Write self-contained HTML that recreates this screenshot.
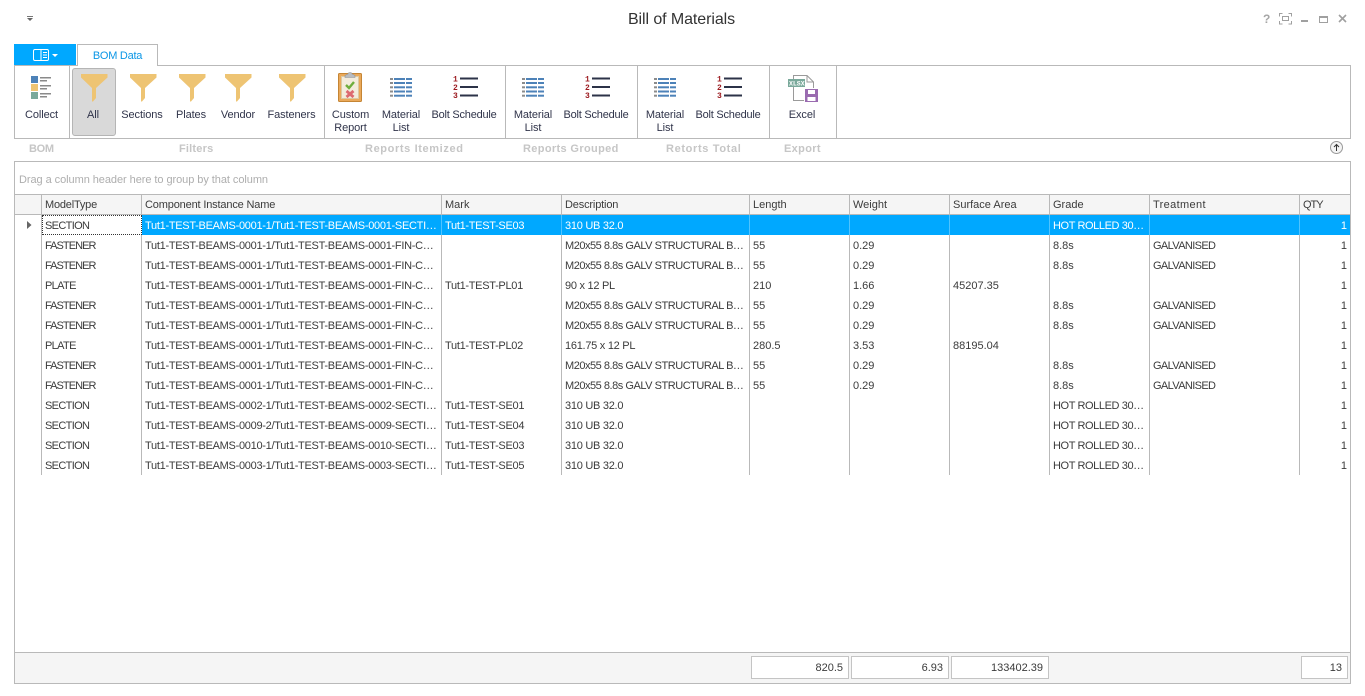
<!DOCTYPE html>
<html>
<head>
<meta charset="utf-8">
<title>Bill of Materials</title>
<style>
html,body{margin:0;padding:0;width:1365px;height:696px;overflow:hidden;background:#fff;}
body{font-family:"Liberation Sans",sans-serif;font-size:11px;color:#3b3b3b;position:relative;}
.a{position:absolute;}
.b{position:absolute;background:#b9b9b9;}
.lb{position:absolute;text-align:center;color:#30344a;line-height:13px;letter-spacing:-.1px;white-space:nowrap;}
.bs{letter-spacing:-.22px;}
.gl{position:absolute;top:142px;font-weight:bold;color:#c6c6c6;white-space:nowrap;font-size:11px;line-height:14px;letter-spacing:.55px;}
svg{position:absolute;overflow:visible;}
table{position:absolute;left:15px;top:195px;border-collapse:separate;border-spacing:0;table-layout:fixed;width:1335px;}
th,td{padding:0 0 0 3px;overflow:hidden;white-space:nowrap;box-sizing:border-box;text-align:left;font-weight:normal;}
th{height:20px;background:#f5f5f5;border-right:1px solid #b9b9b9;border-bottom:1px solid #b9b9b9;color:#3b3b3b;}
td{height:20px;padding-top:2px;border-right:1px solid #b9b9b9;color:#3b3b3b;}
td:first-child,th:first-child{padding:0;}
tr.s td{background:#00a8ff;color:#fff;border-right:1px solid #4fc3ff;}
tr.s td:first-child{background:#fff;border-right:1px solid #b9b9b9;}
tr.s td:nth-child(2){background:#fff;color:#3b3b3b;outline:1px dotted #333;outline-offset:-1px;border-right:0;}
td:last-child,th:last-child,tr.s td:last-child{border-right:0;}
td:last-child{text-align:right;padding:2px 3px 0 0;}
td:nth-child(2){letter-spacing:-.65px;}
td.f{letter-spacing:-.95px;}
td:nth-child(3){letter-spacing:-.29px;}
td:nth-child(4){letter-spacing:-.3px;}
td:nth-child(5){letter-spacing:-.47px;}
td:nth-child(10){letter-spacing:-.63px;}
td.h{letter-spacing:-.4px;}
td.d{letter-spacing:-.27px;}
th.m{letter-spacing:-.2px;}
th.c{letter-spacing:-.16px;}
th.t{letter-spacing:.35px;}
th.q{letter-spacing:-1px;}
.sb{position:absolute;top:656px;height:23px;background:#fff;border:1px solid #c4c4c4;box-sizing:border-box;text-align:right;padding-right:5px;line-height:22px;color:#3b3b3b;}
</style>
</head>
<body>
<svg style="left:27px;top:16px" width="7" height="6"><rect x="0" y="0" width="6" height="1" fill="#777"/><path d="M0 2h6L3 5z" fill="#666"/></svg>
<div class="a" style="left:-1px;width:1365px;top:10px;text-align:center;font-size:16px;line-height:20px;color:#333;letter-spacing:-.08px">Bill of Materials</div>

<svg style="left:1260px;top:12px" width="95" height="14" fill="none" stroke="#a0a0a0">
<text x="3" y="11" font-family="Liberation Sans" font-weight="bold" font-size="12" fill="#a6a6a6" stroke="none">?</text>
<path d="M19.500 4.500V1.500h3M28.500 1.500h3v3M31.500 9v3h-3M22.500 12h-3V9" stroke-width="1"/><rect x="22.500" y="4.500" width="6" height="4"/>
<rect x="41" y="8" width="7" height="2" fill="#a0a0a0" stroke="none"/>
<rect x="59.500" y="4.500" width="8" height="6"/><rect x="59" y="4" width="9" height="2" fill="#a0a0a0" stroke="none"/>
<path d="M79 3l7 7M86 3l-7 7" stroke-width="1.600"/>
</svg>

<!-- tabs -->
<div class="a" style="left:14px;top:44px;width:62px;height:22px;background:#00a8ff"></div>
<svg style="left:33px;top:48px" width="28" height="14" fill="none" stroke="#fff">
<rect x=".5" y="1.500" width="15" height="11" rx="1.500"/><path d="M8 2v10" /><path d="M10 4.500h4M10 7h4M10 9.500h4" stroke="#fff"/>
<path d="M19 6h6l-3 3z" fill="#fff" stroke="none"/>
</svg>
<div class="a" style="left:77px;top:44px;width:81px;height:22px;background:#fff;border:1px solid #b9b9b9;border-bottom:0;box-sizing:border-box;text-align:center;line-height:23px;color:#0a96e6;letter-spacing:-.25px">BOM Data</div>

<!-- ribbon -->
<div class="b" style="left:14px;top:65px;width:63px;height:1px"></div>
<div class="b" style="left:158px;top:65px;width:1193px;height:1px"></div>
<div class="b" style="left:14px;top:138px;width:1337px;height:1px"></div>
<div class="b" style="left:14px;top:65px;width:1px;height:74px"></div>
<div class="b" style="left:1350px;top:65px;width:1px;height:74px"></div>
<div class="b" style="left:69px;top:66px;width:1px;height:72px"></div>
<div class="b" style="left:324px;top:66px;width:1px;height:72px"></div>
<div class="b" style="left:505px;top:66px;width:1px;height:72px"></div>
<div class="b" style="left:637px;top:66px;width:1px;height:72px"></div>
<div class="b" style="left:769px;top:66px;width:1px;height:72px"></div>
<div class="b" style="left:836px;top:66px;width:1px;height:72px"></div>

<div class="a" style="left:72px;top:68px;width:44px;height:68px;background:#d9d9d9;border:1px solid #b5b5b5;border-radius:3px;box-sizing:border-box"></div>

<!-- collect -->
<svg style="left:31px;top:76px" width="22" height="24">
<rect x="0" y="0" width="7" height="7" fill="#4d82b8"/><rect x="0" y="8" width="7" height="7" fill="#eec473"/><rect x="0" y="16" width="7" height="7" fill="#7aa99b"/>
<g fill="#8a8a8a"><rect x="9" y="1" width="11" height="1.500"/><rect x="9" y="4" width="7" height="1.500"/><rect x="9" y="9" width="11" height="1.500"/><rect x="9" y="12" width="7" height="1.500"/><rect x="9" y="17" width="11" height="1.500"/><rect x="9" y="20" width="7" height="1.500"/></g>
</svg>

<!-- funnels -->
<svg style="left:81px;top:74px" width="27" height="28"><path d="M0 0H26.500V3.500L15 14V24L12 27.500H11V14L0 3.500Z" fill="#eec473"/></svg>
<svg style="left:130px;top:74px" width="27" height="28"><path d="M0 0H26.500V3.500L15 14V24L12 27.500H11V14L0 3.500Z" fill="#eec473"/></svg>
<svg style="left:179px;top:74px" width="27" height="28"><path d="M0 0H26.500V3.500L15 14V24L12 27.500H11V14L0 3.500Z" fill="#eec473"/></svg>
<svg style="left:225px;top:74px" width="27" height="28"><path d="M0 0H26.500V3.500L15 14V24L12 27.500H11V14L0 3.500Z" fill="#eec473"/></svg>
<svg style="left:279px;top:74px" width="27" height="28"><path d="M0 0H26.500V3.500L15 14V24L12 27.500H11V14L0 3.500Z" fill="#eec473"/></svg>

<!-- custom report -->
<svg style="left:338px;top:71px" width="26" height="32">
<rect x=".5" y="2.500" width="23" height="28" rx="1" fill="#eaa95a" stroke="#c58534"/>
<rect x="3.500" y="5.500" width="17" height="22" fill="#f3ecdc" stroke="#dcc9a3"/>
<path d="M7 4.500c1-.5 2-1 3-1.500 0-2 4-2 4 0 1 .5 2 1 3 1.500v2H7z" fill="#b9bcc0" stroke="#8e9297" stroke-width=".6"/>
<path d="M8 14l3 3 5-6" fill="none" stroke="#6fae3c" stroke-width="2.400"/>
<path d="M8.500 20l7 6M15.500 20l-7 6" fill="none" stroke="#dd6a70" stroke-width="2.800"/>
</svg>

<!-- material list + bolt -->
<svg width="0" height="0" style="left:0;top:0"><defs>
<g id="ml"><g fill="#8b8b8b"><rect x="0" y="0" width="3" height="2"/><rect x="0" y="4" width="3" height="2"/><rect x="0" y="8.300" width="3" height="2"/><rect x="0" y="12.500" width="3" height="2"/><rect x="0" y="16.700" width="3" height="2"/></g>
<g fill="#4d82b8"><rect x="4" y="0" width="11" height="2"/><rect x="16" y="0" width="6" height="2"/><rect x="4" y="4" width="11" height="2"/><rect x="16" y="4" width="6" height="2"/><rect x="4" y="8.300" width="11" height="2"/><rect x="16" y="8.300" width="6" height="2"/><rect x="4" y="12.500" width="11" height="2"/><rect x="16" y="12.500" width="6" height="2"/><rect x="4" y="16.700" width="11" height="2"/><rect x="16" y="16.700" width="6" height="2"/></g></g>
<g id="bs"><g fill="#2c3348"><rect x="7" y="1.500" width="18" height="2"/><rect x="7" y="10" width="18" height="2"/><rect x="7" y="18.500" width="18" height="2"/></g></g>
</defs></svg>
<svg style="left:390px;top:78px" width="23" height="19"><use href="#ml"/></svg>
<svg style="left:522px;top:78px" width="23" height="19"><use href="#ml"/></svg>
<svg style="left:654px;top:78px" width="23" height="19"><use href="#ml"/></svg>
<svg style="left:453px;top:76px" width="26" height="22"><use href="#bs"/><g font-family="Liberation Mono" font-weight="bold" font-size="8" fill="#9c1a1f"><text x="0" y="5.500">1</text><text x="0" y="14">2</text><text x="0" y="22">3</text></g></svg>
<svg style="left:585px;top:76px" width="26" height="22"><use href="#bs"/><g font-family="Liberation Mono" font-weight="bold" font-size="8" fill="#9c1a1f"><text x="0" y="5.500">1</text><text x="0" y="14">2</text><text x="0" y="22">3</text></g></svg>
<svg style="left:717px;top:76px" width="26" height="22"><use href="#bs"/><g font-family="Liberation Mono" font-weight="bold" font-size="8" fill="#9c1a1f"><text x="0" y="5.500">1</text><text x="0" y="14">2</text><text x="0" y="22">3</text></g></svg>

<!-- excel -->
<svg style="left:787px;top:74px" width="32" height="29">
<path d="M6.500 5V1.500H20l6.500 6.500V14M6.500 13v13.500H17" fill="#fff" stroke="#9a9a9a"/>
<path d="M20 1.500V8h6.500" fill="none" stroke="#9a9a9a"/>
<rect x="1" y="5" width="17" height="8" fill="#7aa99b"/>
<text x="2" y="11.500" font-family="Liberation Mono" font-weight="bold" font-size="6.500" fill="#fff">XLSX</text>
<rect x="18" y="15" width="13" height="13" fill="#9a6bb0"/>
<rect x="21" y="16" width="7" height="4" fill="#fff"/><rect x="20.500" y="23" width="8" height="4" fill="#fff"/>
</svg>

<!-- ribbon labels -->
<div class="lb" style="left:14px;width:55px;top:108px;margin-top:1px">Collect</div>
<div class="lb" style="left:71px;width:44px;top:109px">All</div>
<div class="lb" style="left:118px;width:48px;top:109px">Sections</div>
<div class="lb" style="left:170px;width:42px;top:109px">Plates</div>
<div class="lb" style="left:216px;width:44px;top:109px">Vendor</div>
<div class="lb" style="left:264px;width:55px;top:109px">Fasteners</div>
<div class="lb" style="left:327px;width:47px;top:109px">Custom<br>Report</div>
<div class="lb" style="left:378px;width:46px;top:109px">Material<br>List</div>
<div class="lb bs" style="left:428px;width:72px;top:109px">Bolt Schedule</div>
<div class="lb" style="left:510px;width:46px;top:109px">Material<br>List</div>
<div class="lb bs" style="left:560px;width:72px;top:109px">Bolt Schedule</div>
<div class="lb" style="left:642px;width:46px;top:109px">Material<br>List</div>
<div class="lb bs" style="left:692px;width:72px;top:109px">Bolt Schedule</div>
<div class="lb" style="left:779px;width:46px;top:109px">Excel</div>

<div class="gl" style="left:29px;letter-spacing:-.3px">BOM</div>
<div class="gl" style="left:179px;letter-spacing:.2px">Filters</div>
<div class="gl" style="left:365px;letter-spacing:.62px">Reports Itemized</div>
<div class="gl" style="left:523px;letter-spacing:.35px">Reports Grouped</div>
<div class="gl" style="left:666px;letter-spacing:.65px">Retorts Total</div>
<div class="gl" style="left:784px;letter-spacing:.35px">Export</div>

<svg style="left:1330px;top:141px" width="13" height="13" fill="none"><circle cx="6.500" cy="6.500" r="6" fill="#f4f4f4" stroke="#9a9a9a"/><path d="M6.500 10V3.500M4 6l2.500-2.500L9 6" stroke="#333"/></svg>

<!-- grid frame -->
<div class="a" style="left:14px;top:161px;width:1337px;height:523px;border:1px solid #b9b9b9;box-sizing:border-box"></div>
<div class="b" style="left:15px;top:194px;width:1335px;height:1px"></div>
<div class="a" style="left:19px;top:173px;color:#aeaeae;letter-spacing:-.06px;line-height:14px">Drag a column header here to group by that column</div>

<table>
<colgroup><col style="width:27px"><col style="width:100px"><col style="width:300px"><col style="width:120px"><col style="width:188px"><col style="width:100px"><col style="width:100px"><col style="width:100px"><col style="width:100px"><col style="width:150px"><col style="width:50px"></colgroup>
<tr><th></th><th class="m">ModelType</th><th class="c">Component Instance Name</th><th>Mark</th><th class="c">Description</th><th>Length</th><th>Weight</th><th>Surface Area</th><th>Grade</th><th class="t">Treatment</th><th class="q">QTY</th></tr>
<tr class="s"><td></td><td>SECTION</td><td>Tut1-TEST-BEAMS-0001-1/Tut1-TEST-BEAMS-0001-SECTI…</td><td>Tut1-TEST-SE03</td><td class="d">310 UB 32.0</td><td></td><td></td><td></td><td class="h">HOT ROLLED 30…</td><td></td><td>1</td></tr>
<tr><td></td><td class="f">FASTENER</td><td>Tut1-TEST-BEAMS-0001-1/Tut1-TEST-BEAMS-0001-FIN-C…</td><td></td><td>M20x55 8.8s GALV STRUCTURAL B…</td><td>55</td><td>0.29</td><td></td><td>8.8s</td><td>GALVANISED</td><td>1</td></tr>
<tr><td></td><td class="f">FASTENER</td><td>Tut1-TEST-BEAMS-0001-1/Tut1-TEST-BEAMS-0001-FIN-C…</td><td></td><td>M20x55 8.8s GALV STRUCTURAL B…</td><td>55</td><td>0.29</td><td></td><td>8.8s</td><td>GALVANISED</td><td>1</td></tr>
<tr><td></td><td>PLATE</td><td>Tut1-TEST-BEAMS-0001-1/Tut1-TEST-BEAMS-0001-FIN-C…</td><td>Tut1-TEST-PL01</td><td class="d">90 x 12 PL</td><td>210</td><td>1.66</td><td>45207.35</td><td></td><td></td><td>1</td></tr>
<tr><td></td><td class="f">FASTENER</td><td>Tut1-TEST-BEAMS-0001-1/Tut1-TEST-BEAMS-0001-FIN-C…</td><td></td><td>M20x55 8.8s GALV STRUCTURAL B…</td><td>55</td><td>0.29</td><td></td><td>8.8s</td><td>GALVANISED</td><td>1</td></tr>
<tr><td></td><td class="f">FASTENER</td><td>Tut1-TEST-BEAMS-0001-1/Tut1-TEST-BEAMS-0001-FIN-C…</td><td></td><td>M20x55 8.8s GALV STRUCTURAL B…</td><td>55</td><td>0.29</td><td></td><td>8.8s</td><td>GALVANISED</td><td>1</td></tr>
<tr><td></td><td>PLATE</td><td>Tut1-TEST-BEAMS-0001-1/Tut1-TEST-BEAMS-0001-FIN-C…</td><td>Tut1-TEST-PL02</td><td class="d">161.75 x 12 PL</td><td>280.5</td><td>3.53</td><td>88195.04</td><td></td><td></td><td>1</td></tr>
<tr><td></td><td class="f">FASTENER</td><td>Tut1-TEST-BEAMS-0001-1/Tut1-TEST-BEAMS-0001-FIN-C…</td><td></td><td>M20x55 8.8s GALV STRUCTURAL B…</td><td>55</td><td>0.29</td><td></td><td>8.8s</td><td>GALVANISED</td><td>1</td></tr>
<tr><td></td><td class="f">FASTENER</td><td>Tut1-TEST-BEAMS-0001-1/Tut1-TEST-BEAMS-0001-FIN-C…</td><td></td><td>M20x55 8.8s GALV STRUCTURAL B…</td><td>55</td><td>0.29</td><td></td><td>8.8s</td><td>GALVANISED</td><td>1</td></tr>
<tr><td></td><td>SECTION</td><td>Tut1-TEST-BEAMS-0002-1/Tut1-TEST-BEAMS-0002-SECTI…</td><td>Tut1-TEST-SE01</td><td class="d">310 UB 32.0</td><td></td><td></td><td></td><td class="h">HOT ROLLED 30…</td><td></td><td>1</td></tr>
<tr><td></td><td>SECTION</td><td>Tut1-TEST-BEAMS-0009-2/Tut1-TEST-BEAMS-0009-SECTI…</td><td>Tut1-TEST-SE04</td><td class="d">310 UB 32.0</td><td></td><td></td><td></td><td class="h">HOT ROLLED 30…</td><td></td><td>1</td></tr>
<tr><td></td><td>SECTION</td><td>Tut1-TEST-BEAMS-0010-1/Tut1-TEST-BEAMS-0010-SECTI…</td><td>Tut1-TEST-SE03</td><td class="d">310 UB 32.0</td><td></td><td></td><td></td><td class="h">HOT ROLLED 30…</td><td></td><td>1</td></tr>
<tr><td></td><td>SECTION</td><td>Tut1-TEST-BEAMS-0003-1/Tut1-TEST-BEAMS-0003-SECTI…</td><td>Tut1-TEST-SE05</td><td class="d">310 UB 32.0</td><td></td><td></td><td></td><td class="h">HOT ROLLED 30…</td><td></td><td>1</td></tr>
</table>
<svg style="left:27px;top:221px" width="5" height="8"><path d="M0 0l4.500 4L0 8z" fill="#666"/></svg>

<!-- footer -->
<div class="a" style="left:15px;top:652px;width:1335px;height:31px;background:#f5f5f5;border-top:1px solid #b9b9b9;box-sizing:border-box"></div>
<div class="sb" style="left:751px;width:98px">820.5</div>
<div class="sb" style="left:851px;width:98px">6.93</div>
<div class="sb" style="left:951px;width:98px">133402.39</div>
<div class="sb" style="left:1301px;width:47px">13</div>
</body>
</html>
